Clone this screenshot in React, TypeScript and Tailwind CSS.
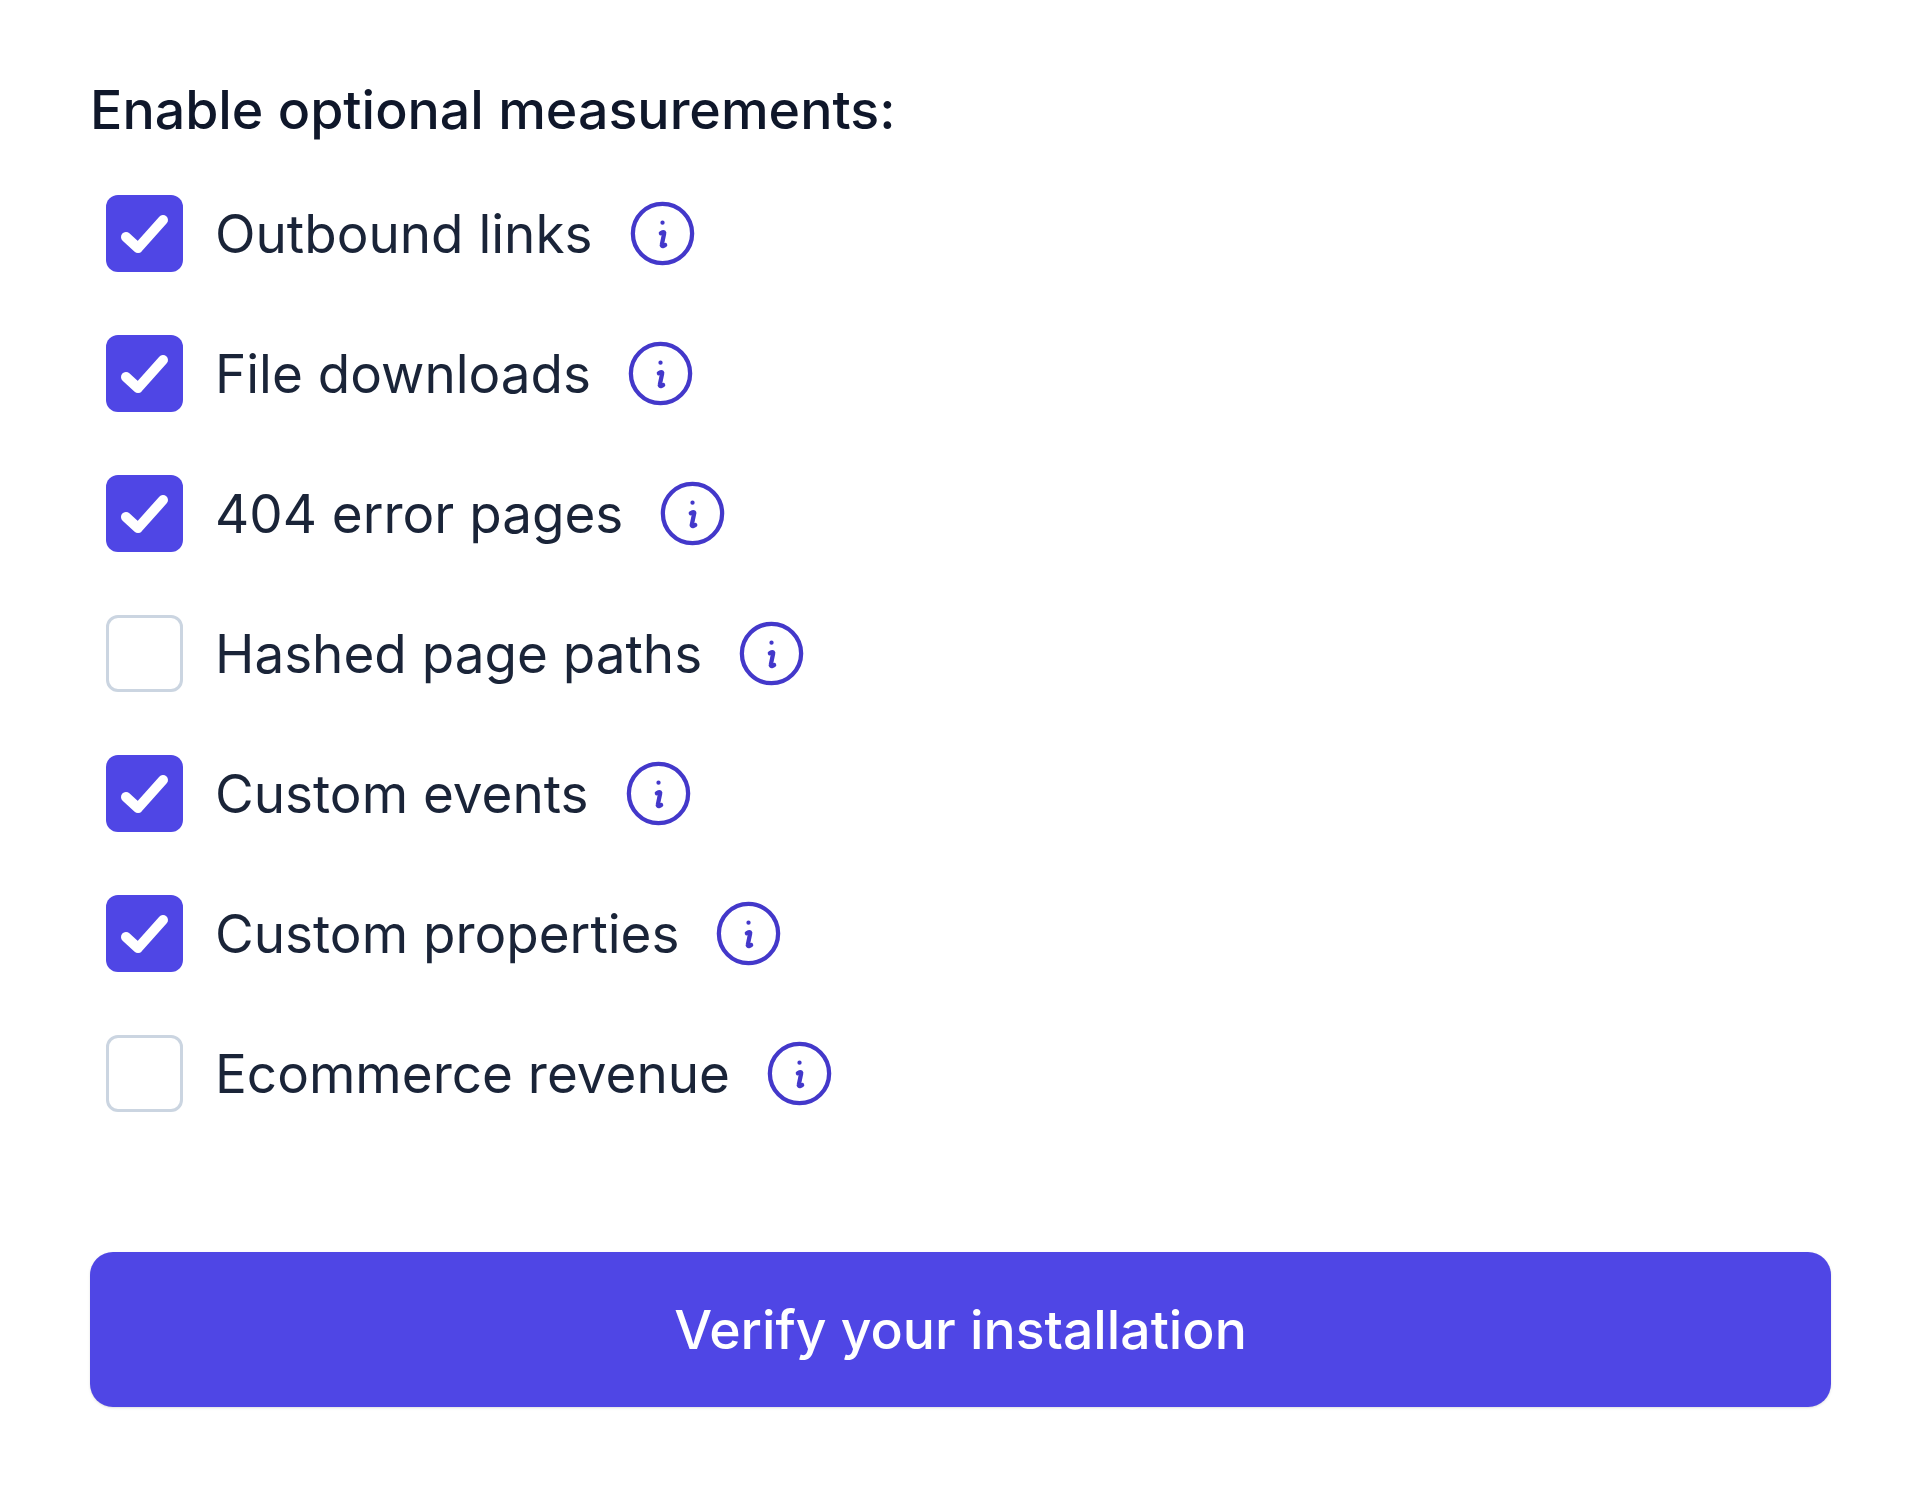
const measurements = [
  { label: "Outbound links", checked: true },
  { label: "File downloads", checked: true },
  { label: "404 error pages", checked: true },
  { label: "Hashed page paths", checked: false },
  { label: "Custom events", checked: true },
  { label: "Custom properties", checked: true },
  { label: "Ecommerce revenue", checked: false },
];

function Checkbox({ checked }: { checked: boolean }) {
  if (!checked) {
    return <div className="h-[77px] w-[77px] shrink-0 rounded-[12px] border-[3px] border-[#cbd5e1] bg-white" />;
  }
  return (
    <div className="h-[77px] w-[77px] shrink-0 rounded-[12px] bg-[#4f46e5]">
      <svg viewBox="0 0 77 77" className="h-full w-full" fill="none" stroke="white" strokeWidth="10" strokeLinecap="round" strokeLinejoin="round">
        <path d="M20 42l12 11 25-28" />
      </svg>
    </div>
  );
}

function InfoIcon() {
  return (
    <svg viewBox="0 0 24 24" className="ml-[30px] h-[79px] w-[79px] shrink-0" fill="none" stroke="#4338ca" strokeWidth="1.3" strokeLinecap="round" strokeLinejoin="round">
      <path d="M21 12a9 9 0 11-18 0 9 9 0 0118 0z" />
      <path d="M11.5 11.9l.6-.3a.3.3 0 01.4.4l-.7 3.4a.3.3 0 00.4.4l.6-.3M12 8.7h.01" />
    </svg>
  );
}

export default function App() {
  return (
    <div className="min-h-[1492px] bg-white pt-[80px] pr-[89px] pl-[90px] font-['Inter',sans-serif]">
      <h2 className="text-[53.7px] leading-[60px] font-medium text-[#0f172a]">Enable optional measurements:</h2>
      <div className="mt-[55px] flex flex-col gap-[63px] pl-[16px]">
        {measurements.map((m) => (
          <div key={m.label} className="flex h-[77px] items-center">
            <Checkbox checked={m.checked} />
            <span className="ml-[32px] pt-[2px] text-[53px] leading-[75px] text-[#1a2438]">{m.label}</span>
            <InfoIcon />
          </div>
        ))}
      </div>
      <button className="mt-[140px] flex h-[155px] w-full items-center justify-center rounded-[23px] bg-[#4f46e5] pt-[2px] text-[53.5px] font-medium text-white shadow-sm">
        Verify your installation
      </button>
    </div>
  );
}
